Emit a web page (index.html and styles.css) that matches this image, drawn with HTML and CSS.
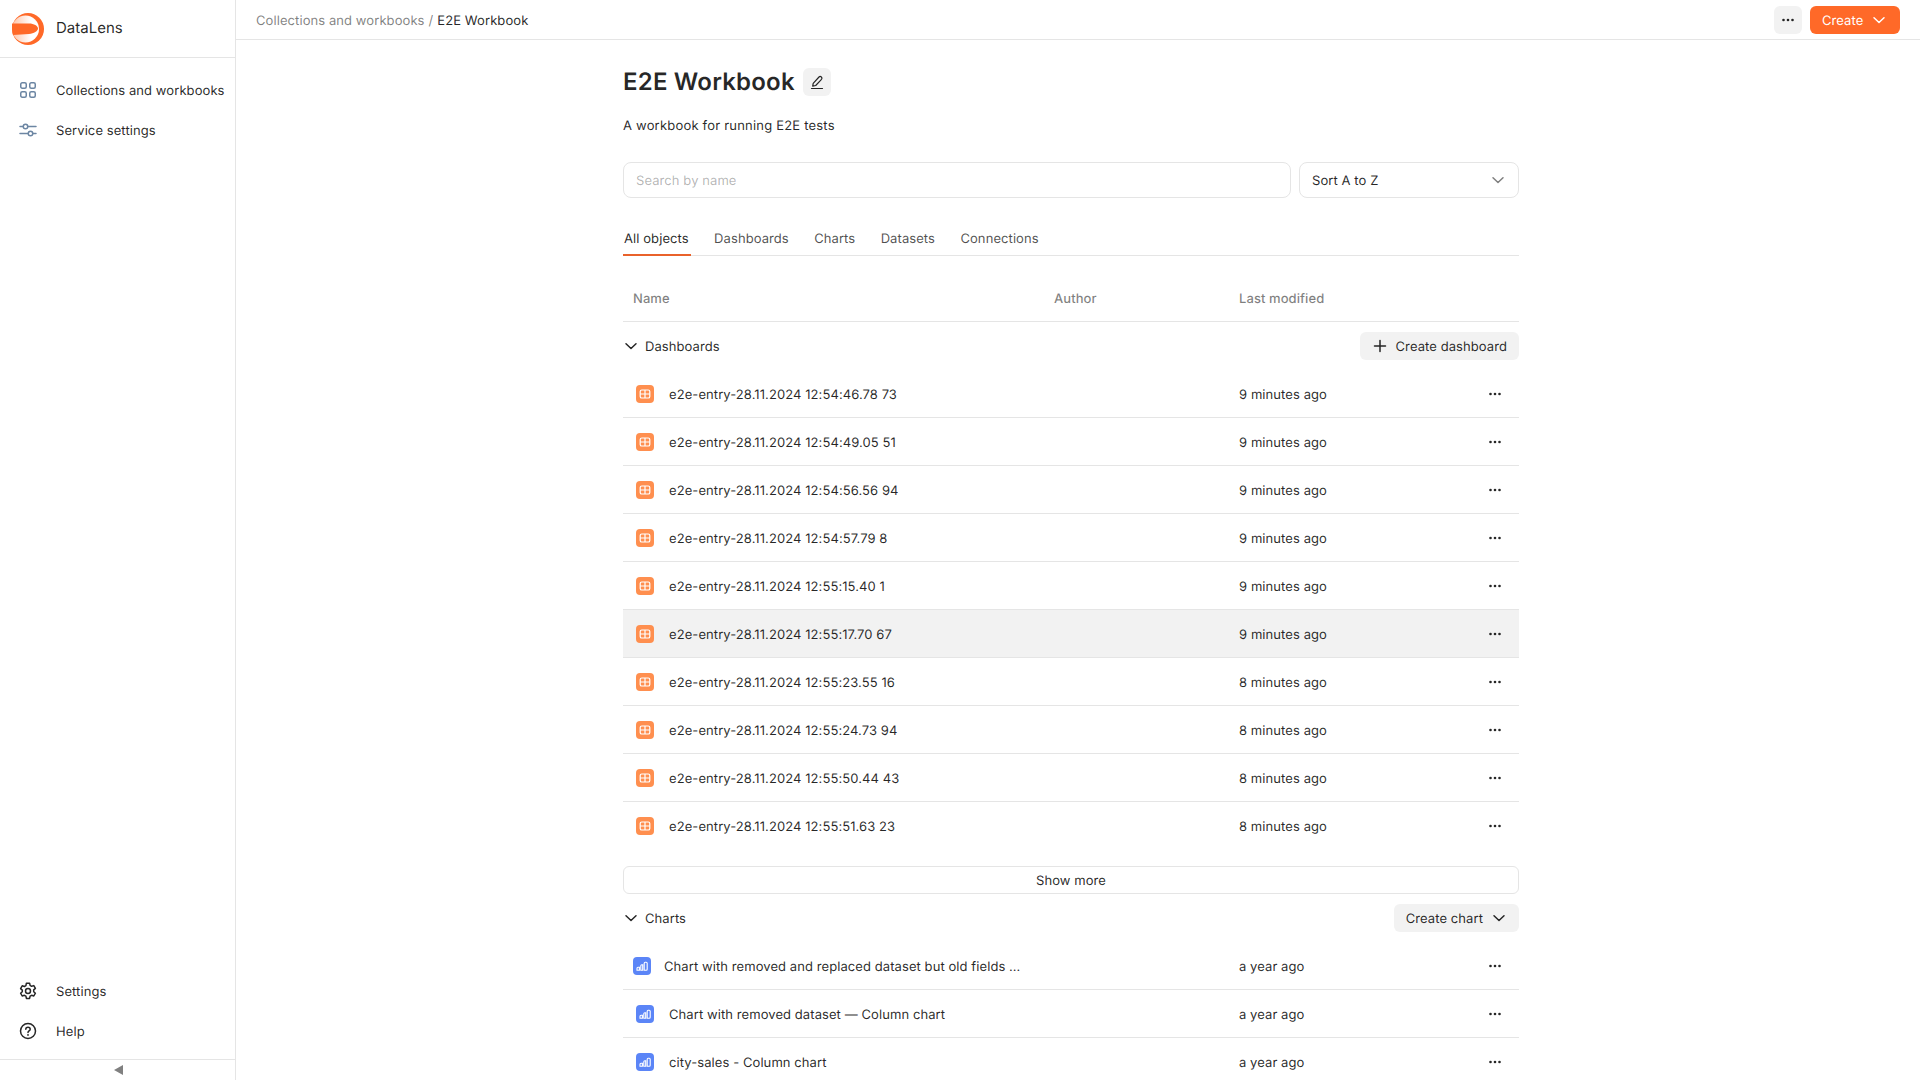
FILE: index.html
```html
<!DOCTYPE html>
<html lang="en">
<head>
    <meta charset="UTF-8">
    <title>E2E Workbook</title>
    <link rel="stylesheet" href="styles.css">
</head>
<body>
    <svg class="sprite" width="0" height="0">
        <symbol id="dash" viewBox="0 0 18 18">
            <rect width="18" height="18" rx="4" fill="#ff8f4f"/>
            <rect x="4.2" y="5" width="9.6" height="8" rx="1.6" fill="none" stroke="#fff" stroke-width="1.2"/>
            <path d="M9 5v8M4.2 9h9.6" stroke="#fff" stroke-width="1.2"/>
        </symbol>
        <symbol id="chart" viewBox="0 0 18 18">
            <rect width="18" height="18" rx="4" fill="#5b85f7"/>
            <path d="M4 13.2v-2a1 1 0 0 1 1-1h1.4v3zM7.8 13.2v-4.500a1 1 0 0 1 1-1h.9v5.500zM11.200 13.200v-7a1 1 0 0 1 1-1h1a1 1 0 0 1 1 1v6a1 1 0 0 1-1 1z" fill="none" stroke="#fff" stroke-width="1.100"/>
        </symbol>
        <symbol id="dots" viewBox="0 0 16 16">
            <circle cx="3.500" cy="8" r="1.300" fill="currentColor"/>
            <circle cx="8" cy="8" r="1.300" fill="currentColor"/>
            <circle cx="12.500" cy="8" r="1.300" fill="currentColor"/>
        </symbol>
        <symbol id="chevron" viewBox="0 0 16 16">
            <path d="M3 5.750 8 10.500l5-4.750" fill="none" stroke="currentColor" stroke-width="1.500" stroke-linecap="round" stroke-linejoin="round"/>
        </symbol>
    </svg>

    <aside class="sidebar">
        <div class="logo-row">
            <svg class="logo" width="32" height="32" viewBox="0 0 32 32">
                <defs>
                    <linearGradient id="lens" x1="0" y1="0" x2="1" y2="0">
                        <stop offset="0" stop-color="#ffc4a8"/>
                        <stop offset="0.7" stop-color="#fff"/>
                    </linearGradient>
                </defs>
                <circle cx="16" cy="16" r="16" fill="#ff6928"/>
                <circle cx="13.500" cy="16" r="13.500" fill="url(#lens)"/>
                <path d="M0 10.500h17c5 0 9 2.500 9 5s-4 5-9 5.500L1 22a16 16 0 0 1-1-6z" fill="#ff6928"/>
            </svg>
            <span class="logo-name">DataLens</span>
        </div>
        <nav class="nav">
            <a class="nav-item">
                <svg class="nav-icon blue" width="18" height="18" viewBox="0 0 18 18" fill="none" stroke="currentColor" stroke-width="1.500">
                    <rect x="1.750" y="1.750" width="5.500" height="5.500" rx="1.500"/>
                    <rect x="10.750" y="1.750" width="5.500" height="5.500" rx="1.500"/>
                    <rect x="1.750" y="10.750" width="5.500" height="5.500" rx="1.500"/>
                    <rect x="10.750" y="10.750" width="5.500" height="5.500" rx="1.500"/>
                </svg>
                <span class="lbl">Collections and workbooks</span>
            </a>
            <a class="nav-item">
                <svg class="nav-icon blue" width="18" height="18" viewBox="0 0 18 18" fill="none" stroke="currentColor" stroke-width="1.500">
                    <path d="M1 5.500h3M9 5.500h8M1 12.500h8M14 12.500h3" stroke-linecap="round"/>
                    <circle cx="6.500" cy="5.500" r="2.250"/>
                    <circle cx="11.500" cy="12.500" r="2.250"/>
                </svg>
                <span class="lbl">Service settings</span>
            </a>
        </nav>
        <nav class="nav nav-bottom">
            <a class="nav-item">
                <svg class="nav-icon" width="18" height="18" viewBox="0 0 18 18" fill="none" stroke="currentColor" stroke-width="1.500" stroke-linejoin="round">
                    <path d="M7.400 1.200h3.200l.5 2.200 1.500.9 2.200-.7 1.600 2.800-1.700 1.500v1.800l1.700 1.500-1.600 2.800-2.200-.7-1.500.9-.5 2.200H7.400l-.5-2.200-1.500-.9-2.200.7-1.600-2.800 1.700-1.500V8.100L1.600 6.600l1.600-2.800 2.200.7 1.500-.9z"/>
                    <circle cx="9" cy="9" r="2.500"/>
                </svg>
                <span class="lbl">Settings</span>
            </a>
            <a class="nav-item">
                <svg class="nav-icon" width="18" height="18" viewBox="0 0 18 18" fill="none" stroke="currentColor" stroke-width="1.500">
                    <circle cx="9" cy="9" r="7.500"/>
                    <path d="M6.800 7.200C6.800 6 7.800 5.200 9 5.200s2.200.8 2.200 2c0 1.700-2.200 1.700-2.200 3.300" stroke-linecap="round"/>
                    <circle cx="9" cy="12.900" r=".9" fill="currentColor" stroke="none"/>
                </svg>
                <span class="lbl">Help</span>
            </a>
        </nav>
        <div class="collapse"><span class="collapse-arrow"></span></div>
    </aside>

    <div class="main">
        <header class="topbar">
            <div class="crumbs lbl">
                <span class="crumb-link">Collections and workbooks</span>
                <span class="crumb-link">/</span>
                <span>E2E Workbook</span>
            </div>
            <div class="top-actions">
                <button class="btn btn-square"><svg width="16" height="16"><use href="#dots"/></svg></button>
                <button class="btn btn-orange"><span class="lbl">Create</span> <svg width="16" height="16"><use href="#chevron"/></svg></button>
            </div>
        </header>

        <main class="content">
            <div class="title-row">
                <h1>E2E Workbook</h1>
                <button class="btn btn-square">
                    <svg width="16" height="16" viewBox="0 0 16 16" fill="none" stroke="currentColor" stroke-width="1.200" stroke-linejoin="round">
                        <path d="M4.200 9.300 10 3a1.700 1.700 0 0 1 2.500 2.300l-5.800 6.200-3 .7z"/>
                        <path d="M2.500 14.500h11" stroke-linecap="round"/>
                    </svg>
                </button>
            </div>
            <p class="description">A workbook for running E2E tests</p>

            <div class="filters">
                <input class="search" type="text" placeholder="Search by name">
                <div class="select"><span class="lbl">Sort A to Z</span> <svg width="16" height="16"><use href="#chevron"/></svg></div>
            </div>

            <div class="tabs">
                <span class="tab active">All objects</span>
                <span class="tab">Dashboards</span>
                <span class="tab">Charts</span>
                <span class="tab">Datasets</span>
                <span class="tab">Connections</span>
            </div>

            <div class="table-head">
                <span>Name</span>
                <span>Author</span>
                <span>Last modified</span>
            </div>

            <div class="section-head">
                <span class="section-title"><svg width="16" height="16"><use href="#chevron"/></svg><span class="lbl">Dashboards</span></span>
                <button class="btn">
                    <svg width="16" height="16" viewBox="0 0 16 16"><path d="M8 2.500v11M2.500 8h11" fill="none" stroke="currentColor" stroke-width="1.500" stroke-linecap="round"/></svg>
                    <span class="lbl">Create dashboard</span>
                </button>
            </div>
            <div id="dashboards"></div>

            <button class="show-more">Show more</button>

            <div class="section-head">
                <span class="section-title"><svg width="16" height="16"><use href="#chevron"/></svg><span class="lbl">Charts</span></span>
                <button class="btn"><span class="lbl">Create chart</span> <svg width="16" height="16"><use href="#chevron"/></svg></button>
            </div>
            <div id="charts"></div>
        </main>
    </div>

    <script>
        const dashboards = [
            ['e2e-entry-28.11.2024 12:54:46.78 73', '9 minutes ago'],
            ['e2e-entry-28.11.2024 12:54:49.05 51', '9 minutes ago'],
            ['e2e-entry-28.11.2024 12:54:56.56 94', '9 minutes ago'],
            ['e2e-entry-28.11.2024 12:54:57.79 8', '9 minutes ago'],
            ['e2e-entry-28.11.2024 12:55:15.40 1', '9 minutes ago'],
            ['e2e-entry-28.11.2024 12:55:17.70 67', '9 minutes ago', 'hover'],
            ['e2e-entry-28.11.2024 12:55:23.55 16', '8 minutes ago'],
            ['e2e-entry-28.11.2024 12:55:24.73 94', '8 minutes ago'],
            ['e2e-entry-28.11.2024 12:55:50.44 43', '8 minutes ago'],
            ['e2e-entry-28.11.2024 12:55:51.63 23', '8 minutes ago']
        ];
        const charts = [
            ['Chart with removed and replaced dataset but old fields …', 'a year ago', 'long'],
            ['Chart with removed dataset — Column chart', 'a year ago'],
            ['city-sales - Column chart', 'a year ago']
        ];

        function fill(id, icon, items) {
            document.getElementById(id).innerHTML = items.map(function(item) {
                return `<div class="row ${item[2] || ''}">
                    <svg class="row-icon" width="18" height="18"><use href="#${icon}"/></svg>
                    <span class="row-name lbl">${item[0]}</span>
                    <span class="row-date lbl">${item[1]}</span>
                    <svg class="row-dots" width="16" height="16"><use href="#dots"/></svg>
                </div>`;
            }).join('');
        }

        fill('dashboards', 'dash', dashboards);
        fill('charts', 'chart', charts);
    </script>
</body>
</html>
```

FILE: styles.css
```css
* {
    box-sizing: border-box;
}
html, body {
    height: 100%;
}
body {
    margin: 0;
    display: flex;
    overflow: hidden;
    font-family: Inter, "Liberation Sans", sans-serif;
    font-size: 13px;
    line-height: 20px;
    letter-spacing: 0.08px;
    color: rgba(0, 0, 0, 0.85);
    background: #fff;
    text-rendering: geometricPrecision;
}
button, input {
    font: inherit;
    color: inherit;
    letter-spacing: inherit;
    text-rendering: inherit;
}
.sprite {
    position: absolute;
}
/* text sits a pixel lower than the icons next to it */
.lbl {
    padding-top: 2px;
}

/* sidebar */
.sidebar {
    width: 236px;
    flex: none;
    height: 100vh;
    display: flex;
    flex-direction: column;
    border-right: 1px solid #e5e5e5;
}
.logo-row {
    height: 58px;
    flex: none;
    display: flex;
    align-items: center;
    padding-left: 12px;
    border-bottom: 1px solid #e5e5e5;
}
.logo-name {
    margin-left: 12px;
    margin-bottom: 2px;
    font-size: 15px;
    letter-spacing: 0;
}
.nav {
    display: flex;
    flex-direction: column;
    padding-top: 12px;
}
.nav-bottom {
    margin-top: auto;
    padding-top: 0;
    padding-bottom: 8px;
}
.nav-item {
    height: 40px;
    display: flex;
    align-items: center;
    padding-left: 19px;
    gap: 19px;
    white-space: nowrap;
}
.nav-icon {
    flex: none;
}
.nav-icon.blue {
    color: #6c86a3;
}
.collapse {
    height: 21px;
    flex: none;
    display: flex;
    align-items: center;
    justify-content: center;
    padding-left: 2px;
    border-top: 1px solid #e5e5e5;
}
.collapse-arrow {
    border-style: solid;
    border-width: 5px 9px 5px 0;
    border-color: transparent #808080 transparent transparent;
}

/* top bar */
.main {
    flex: 1;
    min-width: 0;
}
.topbar {
    height: 40px;
    display: flex;
    align-items: center;
    justify-content: space-between;
    padding: 0 20px;
    border-bottom: 1px solid #e5e5e5;
}
.crumbs {
    display: flex;
    gap: 4px;
}
.crumb-link {
    color: rgba(0, 0, 0, 0.5);
}
.top-actions {
    display: flex;
    gap: 8px;
}

/* buttons */
.btn {
    height: 28px;
    display: inline-flex;
    align-items: center;
    gap: 8px;
    padding: 0 12px;
    border: none;
    border-radius: 6px;
    background: #f2f2f2;
    white-space: nowrap;
}
.btn-square {
    width: 28px;
    padding: 0;
    justify-content: center;
}
.btn-orange {
    width: 90px;
    background: #ff6928;
    color: #fff;
}

/* content */
.content {
    width: 896px;
    margin-left: 387px;
}
.title-row {
    display: flex;
    align-items: center;
    gap: 8px;
    height: 28px;
    margin-top: 28px;
}
h1 {
    margin: 0;
    font-size: 24px;
    line-height: 28px;
    font-weight: 600;
    letter-spacing: 0.2px;
}
.description {
    margin: 20px 0 0;
    letter-spacing: 0.2px;
}
.filters {
    display: flex;
    gap: 8px;
    margin-top: 26px;
}
.search {
    flex: 1;
    height: 36px;
    padding: 2px 12px 0;
    border: 1px solid #e5e5e5;
    border-radius: 8px;
    outline: none;
}
.search::placeholder {
    color: rgba(0, 0, 0, 0.3);
}
.select {
    width: 220px;
    height: 36px;
    display: flex;
    align-items: center;
    justify-content: space-between;
    padding: 0 12px;
    border: 1px solid #e5e5e5;
    border-radius: 8px;
}
.select svg {
    color: rgba(0, 0, 0, 0.5);
}
.tabs {
    display: flex;
    gap: 22.4px;
    height: 40px;
    margin-top: 18px;
    border-bottom: 1px solid #e5e5e5;
}
.tab {
    height: 40px;
    padding: 13px 2px 0 1px;
    color: rgba(0, 0, 0, 0.7);
}
.tab.active {
    color: rgba(0, 0, 0, 0.85);
    border-bottom: 2px solid #e9622b;
}

/* table */
.table-head {
    height: 66px;
    display: grid;
    grid-template-columns: 421px 185px 1fr;
    align-items: end;
    padding-left: 10px;
    padding-bottom: 12px;
    font-weight: 500;
    color: rgba(0, 0, 0, 0.5);
    border-bottom: 1px solid #e5e5e5;
}
.section-head {
    height: 48px;
    display: flex;
    align-items: center;
    justify-content: space-between;
}
.section-title {
    display: flex;
    align-items: center;
    gap: 6px;
}
.row {
    height: 48px;
    display: grid;
    grid-template-columns: 18px 1fr 233px 16px;
    column-gap: 15px;
    align-items: center;
    padding: 0 16px 0 13px;
    border-bottom: 1px solid #e5e5e5;
}
.row:last-child {
    border-bottom: none;
}
.row.hover {
    background: #f2f2f2;
}
.row.long {
    grid-template-columns: 18px 1fr 235px 16px;
    padding-left: 10px;
    column-gap: 13px;
}
.row-name {
    white-space: nowrap;
}
.row-icon {
    display: block;
}
.row-dots {
    color: rgba(0, 0, 0, 0.85);
}
.show-more {
    display: block;
    width: 100%;
    height: 28px;
    margin-top: 16px;
    padding-top: 2px;
    border: 1px solid #e5e5e5;
    border-radius: 6px;
    background: #fff;
}
```
